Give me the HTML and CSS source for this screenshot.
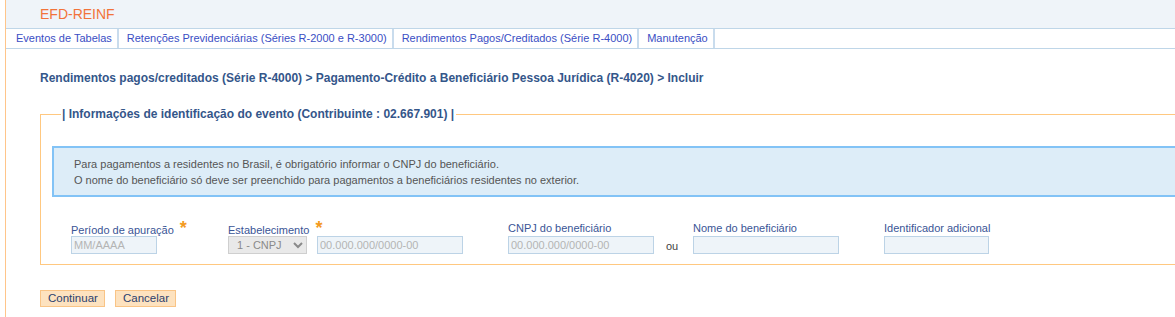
FILE: index.html
```html
<!DOCTYPE html>
<html lang="pt-BR">
<head>
  <meta charset="UTF-8">
  <title>EFD-REINF</title>
  <link rel="stylesheet" href="styles.css">
</head>
<body>
  <div class="page">
    <div class="header">
      <span class="logo">EFD-REINF</span>
    </div>
    <ul class="tabs">
      <li>Eventos de Tabelas</li>
      <li>Retenções Previdenciárias (Séries R-2000 e R-3000)</li>
      <li>Rendimentos Pagos/Creditados (Série R-4000)</li>
      <li>Manutenção</li>
    </ul>

    <div class="content">
      <h2 class="crumb">Rendimentos pagos/creditados (Série R-4000) &gt; Pagamento-Crédito a Beneficiário Pessoa Jurídica (R-4020) &gt; Incluir</h2>

      <fieldset class="box">
        <legend>| Informações de identificação do evento (Contribuinte : 02.667.901) |</legend>

        <div class="info">
          Para pagamentos a residentes no Brasil, é obrigatório informar o CNPJ do beneficiário.<br>
          O nome do beneficiário só deve ser preenchido para pagamentos a beneficiários residentes no exterior.
        </div>

        <div class="fields">
          <div class="field f-periodo">
            <label>Período de apuração <span class="req">*</span></label>
            <input type="text" class="inp w-periodo" placeholder="MM/AAAA">
          </div>
          <div class="field f-estab">
            <label>Estabelecimento <span class="req">*</span></label>
            <div class="row">
              <select class="sel"><option>1 - CNPJ</option></select>
              <input type="text" class="inp w-cnpj" placeholder="00.000.000/0000-00">
            </div>
          </div>
          <div class="field f-benef">
            <label>CNPJ do beneficiário</label>
            <div class="row">
              <input type="text" class="inp w-cnpj" placeholder="00.000.000/0000-00">
              <span class="ou">ou</span>
            </div>
          </div>
          <div class="field f-nome">
            <label>Nome do beneficiário</label>
            <input type="text" class="inp w-cnpj">
          </div>
          <div class="field">
            <label>Identificador adicional</label>
            <input type="text" class="inp w-ident">
          </div>
        </div>
      </fieldset>

      <div class="actions">
        <button class="btn">Continuar</button>
        <button class="btn">Cancelar</button>
      </div>
    </div>
  </div>
</body>
</html>
```

FILE: styles.css
```css
html, body {
  margin: 0;
  padding: 0;
  overflow: hidden;
  background: #fff;
}

body {
  font-family: "Liberation Sans", Arial, sans-serif;
  font-size: 11px;
}

.page {
  margin-left: 5px;
  border-left: 1px solid #ffc58a;
  min-height: 317px;
  width: 1400px;
}

.header {
  background: #eff4f9;
  height: 28px;
  padding-left: 34px;
  box-sizing: border-box;
}

.logo {
  color: #f2733a;
  font-size: 14px;
  line-height: 28px;
}

.tabs {
  list-style: none;
  margin: 0;
  padding: 0;
  display: flex;
  border-top: 1px solid #bfd6e8;
  border-bottom: 1px solid #bfd6e8;
  background: #fff;
  height: 19px;
}

.tabs li {
  color: #3a4ec4;
  padding: 0 5px 0 8px;
  line-height: 19px;
  border-right: 2px solid #c9dced;
}

.tabs li:first-child {
  padding-left: 10px;
}

.content {
  padding-left: 34px;
}

.crumb {
  margin: 0;
  padding-top: 22px;
  font-size: 12px;
  color: #34568a;
  font-weight: bold;
  line-height: 14px;
}

.box {
  margin: 22px 0 0 0;
  border: 1px solid #ffc880;
  border-right: none;
  padding: 25px 0 10px 11px;
  height: 158px;
  box-sizing: border-box;
}

.box legend {
  color: #34568a;
  font-weight: bold;
  font-size: 12px;
  margin-left: 9px;
  padding: 0 2px 0 1px;
}

.info {
  background: #ddedf8;
  border: 2px solid #82c3f6;
  border-right: none;
  color: #555;
  font-size: 11px;
  line-height: 16px;
  padding: 8px 20px 7px 20px;
}

.fields {
  display: flex;
  margin-top: 24px;
  padding-left: 19px;
}

.field {
  display: flex;
  flex-direction: column;
}

.field label {
  color: #3a5596;
  font-size: 11px;
  line-height: 14px;
  height: 15px;
}

.req {
  color: #f39a1e;
  font-size: 18px;
  font-weight: bold;
  position: relative;
  top: 0;
  margin-left: 3px;
}

.row {
  display: flex;
  align-items: center;
}

.f-periodo { width: 157px; }
.f-estab { width: 280px; }
.f-benef { width: 185px; }
.f-nome { width: 191px; }

.inp {
  height: 18px;
  box-sizing: border-box;
  border: 1px solid #bcd3e6;
  background: #eef4f9;
  font-family: "Liberation Sans", Arial, sans-serif;
  font-size: 11px;
  padding: 0 2px;
  margin: 0;
}

.inp::placeholder {
  color: #b4b4b4;
}

.w-periodo { width: 86px; }
.w-cnpj { width: 146px; }
.w-ident { width: 105px; }

.sel {
  width: 79px;
  height: 18px;
  margin: 0 10px 0 0;
  border: 1px solid #cfcfcf;
  background: #e9e9e9;
  color: #8a8a8a;
  font-family: "Liberation Sans", Arial, sans-serif;
  font-size: 11px;
  padding: 0 0 0 4px;
}

.ou {
  color: #444;
  margin-left: 12px;
  position: relative;
  top: 1px;
}

.actions {
  display: flex;
  gap: 10px;
  margin-top: 25px;
}

.btn {
  height: 17px;
  padding: 0 7px;
  font-family: "Liberation Sans", Arial, sans-serif;
  font-size: 11.5px;
  color: #2b3f6e;
  background: #fde2bf;
  border: 1px solid #f9c486;
  line-height: 15px;
}

.btn:first-child { width: 65px; }
.btn:last-child { width: 61px; }
```
